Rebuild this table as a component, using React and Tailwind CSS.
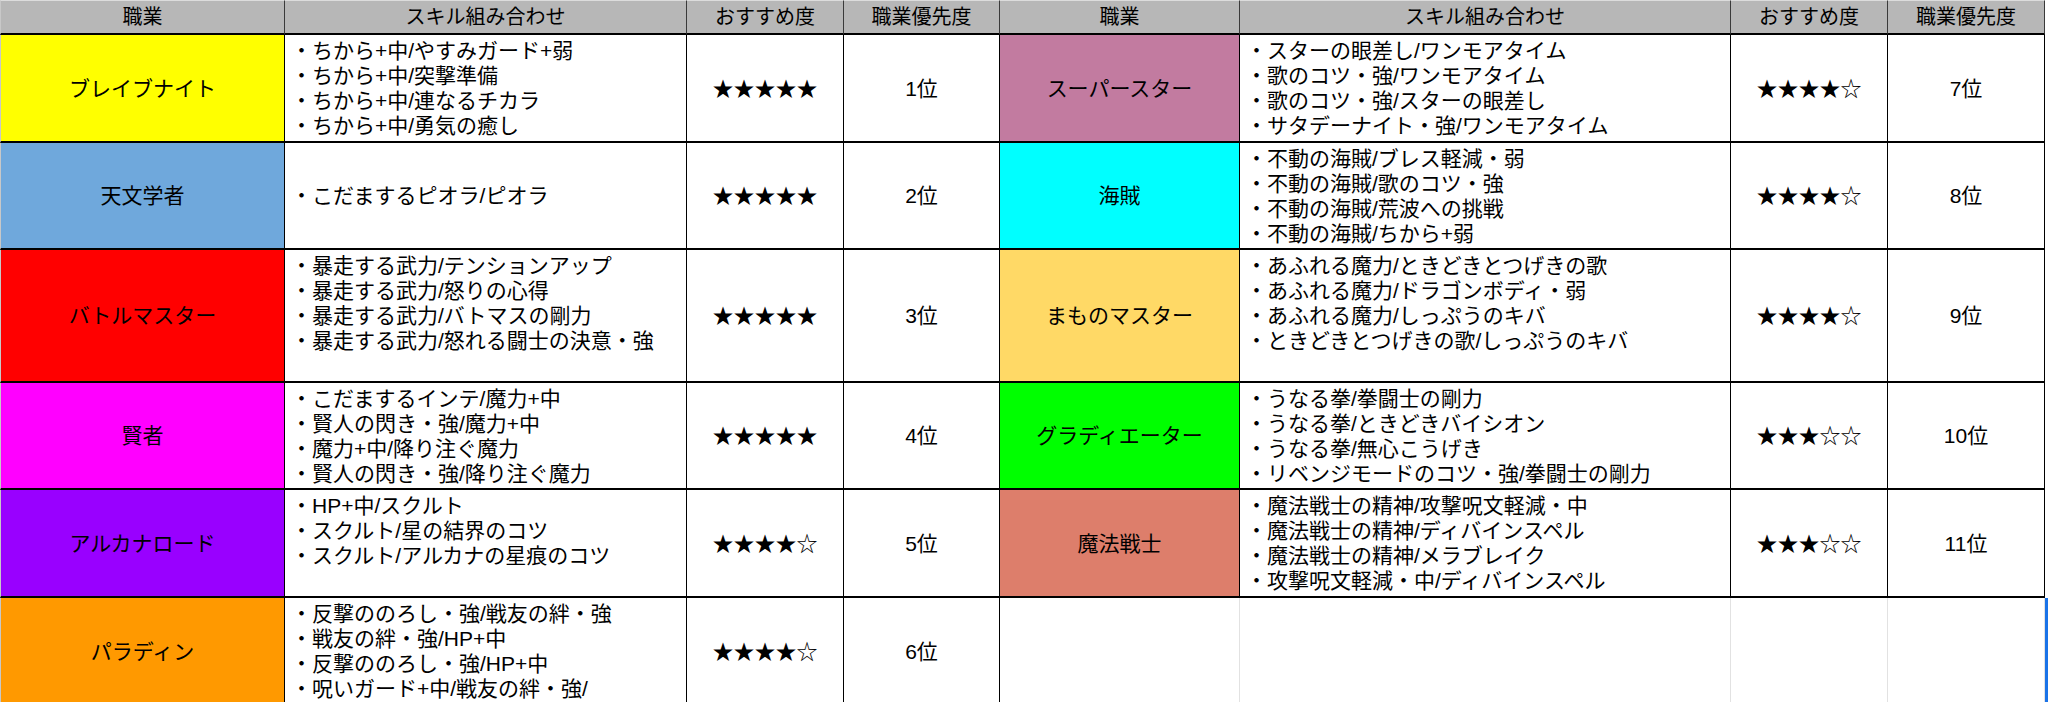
import React from "react";

const rows = [
  {
    h: "h-[108px]",
    l: { job: "ブレイブナイト", bg: "bg-[#ffff00]", skills: ["・ちから+中/やすみガード+弱", "・ちから+中/突撃準備", "・ちから+中/連なるチカラ", "・ちから+中/勇気の癒し"], stars: "★★★★★", rank: "1位" },
    r: { job: "スーパースター", bg: "bg-[#c27ba0]", skills: ["・スターの眼差し/ワンモアタイム", "・歌のコツ・強/ワンモアタイム", "・歌のコツ・強/スターの眼差し", "・サタデーナイト・強/ワンモアタイム"], stars: "★★★★☆", rank: "7位" },
  },
  {
    h: "h-[107px]",
    l: { job: "天文学者", bg: "bg-[#6fa8dc]", skills: ["・こだまするピオラ/ピオラ"], stars: "★★★★★", rank: "2位" },
    r: { job: "海賊", bg: "bg-[#00ffff]", skills: ["・不動の海賊/ブレス軽減・弱", "・不動の海賊/歌のコツ・強", "・不動の海賊/荒波への挑戦", "・不動の海賊/ちから+弱"], stars: "★★★★☆", rank: "8位" },
  },
  {
    h: "h-[133px]",
    l: { job: "バトルマスター", bg: "bg-[#ff0000]", skills: ["・暴走する武力/テンションアップ", "・暴走する武力/怒りの心得", "・暴走する武力/バトマスの剛力", "・暴走する武力/怒れる闘士の決意・強", ""], stars: "★★★★★", rank: "3位" },
    r: { job: "まものマスター", bg: "bg-[#ffd966]", skills: ["・あふれる魔力/ときどきとつげきの歌", "・あふれる魔力/ドラゴンボディ・弱", "・あふれる魔力/しっぷうのキバ", "・ときどきとつげきの歌/しっぷうのキバ", ""], stars: "★★★★☆", rank: "9位" },
  },
  {
    h: "h-[107px]",
    l: { job: "賢者", bg: "bg-[#ff00ff]", skills: ["・こだまするインテ/魔力+中", "・賢人の閃き・強/魔力+中", "・魔力+中/降り注ぐ魔力", "・賢人の閃き・強/降り注ぐ魔力"], stars: "★★★★★", rank: "4位" },
    r: { job: "グラディエーター", bg: "bg-[#00ff00]", skills: ["・うなる拳/拳闘士の剛力", "・うなる拳/ときどきバイシオン", "・うなる拳/無心こうげき", "・リベンジモードのコツ・強/拳闘士の剛力"], stars: "★★★☆☆", rank: "10位" },
  },
  {
    h: "h-[108px]",
    l: { job: "アルカナロード", bg: "bg-[#9900ff]", skills: ["・HP+中/スクルト", "・スクルト/星の結界のコツ", "・スクルト/アルカナの星痕のコツ", ""], stars: "★★★★☆", rank: "5位" },
    r: { job: "魔法戦士", bg: "bg-[#dd7e6b]", skills: ["・魔法戦士の精神/攻撃呪文軽減・中", "・魔法戦士の精神/ディバインスペル", "・魔法戦士の精神/メラブレイク", "・攻撃呪文軽減・中/ディバインスペル"], stars: "★★★☆☆", rank: "11位" },
  },
  {
    h: "h-[108px]",
    l: { job: "パラディン", bg: "bg-[#ff9900]", skills: ["・反撃ののろし・強/戦友の絆・強", "・戦友の絆・強/HP+中", "・反撃ののろし・強/HP+中", "・呪いガード+中/戦友の絆・強/"], stars: "★★★★☆", rank: "6位" },
    r: null,
  },
];

const headers = ["職業", "スキル組み合わせ", "おすすめ度", "職業優先度"];

function Half({ d, first }) {
  return (
    <>
      <div className={`${d.bg} ${first ? "border-l border-l-[#c8c8c8]" : ""} border-r border-b-2 border-black flex items-center justify-center`}>
        {d.job}
      </div>
      <div className="bg-white border-r border-b-2 border-black flex flex-col justify-center pl-[6px]">
        {d.skills.map((s, i) => (
          <div key={i} className="h-[25px] whitespace-nowrap">{s}</div>
        ))}
      </div>
      <div className="bg-white border-r border-b-2 border-black flex items-center justify-center">
        {d.stars}
      </div>
      <div className="bg-white border-r border-b-2 border-black flex items-center justify-center">
        {d.rank}
      </div>
    </>
  );
}

export default function App() {
  return (
    <div
      className="w-[2048px] h-[702px] overflow-hidden bg-white text-black text-[21px] leading-[25px]"
      style={{ fontFamily: '"Liberation Sans", "Noto Sans CJK JP", sans-serif' }}
    >
      <div className="flex h-[35px]">
        {[...headers, ...headers].map((h, i) => (
          <div
            key={i}
            className={`${["w-[285px]", "w-[402px]", "w-[157px]", "w-[156px]", "w-[240px]", "w-[491px]", "w-[157px]", "w-[157px]"][i]} ${i === 0 ? "border-l border-l-[#c8c8c8]" : ""} shrink-0 bg-[#b7b7b7] border-t border-t-[#dcdcdc] border-r border-r-[#3a3a3a] border-b-2 border-b-black flex items-center justify-center text-[20px]`}
          >
            {h}
          </div>
        ))}
        <div className="w-[3px] shrink-0 bg-white" />
      </div>
      {rows.map((row, ri) => (
        <div
          key={ri}
          className={`${row.h} grid grid-cols-[285px_402px_157px_156px_240px_491px_157px_157px_3px]`}
        >
          <Half d={row.l} first />
          {row.r ? (
            <>
              <Half d={row.r} />
              <div className="bg-white" />
            </>
          ) : (
            <>
              <div className="bg-white border-r border-[#e2e2e2]" />
              <div className="bg-white border-r border-[#e2e2e2]" />
              <div className="bg-white border-r border-[#e2e2e2]" />
              <div className="bg-white border-r border-[#e2e2e2]" />
              <div className="bg-[#1a73e8]" />
            </>
          )}
        </div>
      ))}
    </div>
  );
}
